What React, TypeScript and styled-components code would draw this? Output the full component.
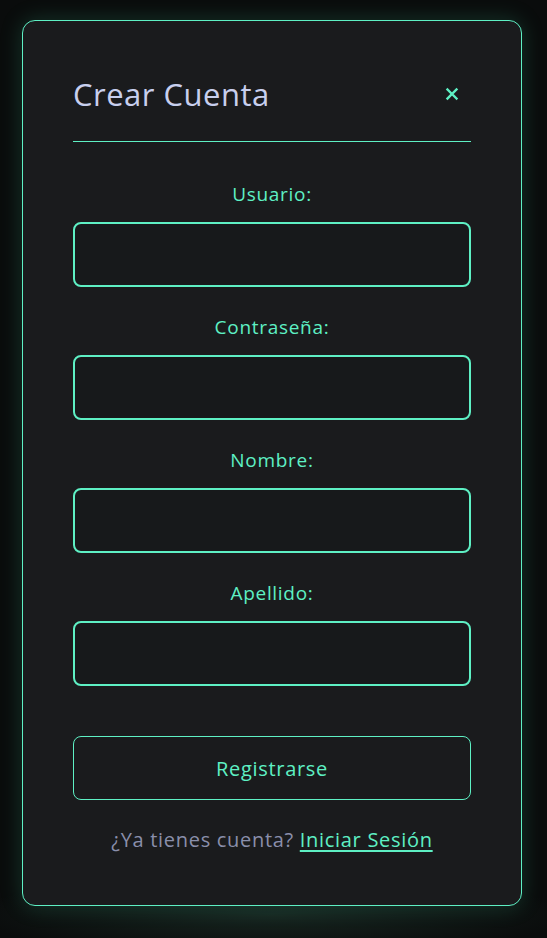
import React from "react";
import styled, { createGlobalStyle } from "styled-components";

const MINT = "#5ef0c4";

const Global = createGlobalStyle`
  html, body {
    margin: 0;
    padding: 0;
    background: #0a0c0c;
    font-family: "Open Sans", "Noto Sans", sans-serif;
  }
  * { box-sizing: border-box; }
`;

const Page = styled.div`
  width: 547px;
  height: 938px;
  padding: 20px 0 0 22px;
  background:
    radial-gradient(ellipse 300px 40px at 270px 915px, rgba(60, 110, 90, 0.25), transparent),
    #0a0c0c;
  overflow: hidden;
`;

const Card = styled.div`
  width: 500px;
  height: 886px;
  background: #1a1b1d;
  border: 1px solid ${MINT};
  border-radius: 13px;
  box-shadow: 0 0 22px rgba(60, 200, 150, 0.22);
  padding: 0 50px;
  display: flex;
  flex-direction: column;
`;

const Header = styled.div`
  height: 121px;
  padding-top: 52px;
  display: flex;
  justify-content: space-between;
  align-items: flex-start;
  border-bottom: 1px solid ${MINT};
`;

const Title = styled.h2`
  margin: 0;
  font-weight: 400;
  font-size: 31px;
  letter-spacing: 0.5px;
  line-height: 42px;
  color: #c8cfee;
`;

const Close = styled.button`
  background: none;
  border: none;
  padding: 0;
  margin: 14px 12px 0 0;
  width: 14px;
  height: 14px;
  display: flex;
  cursor: pointer;
`;

const Form = styled.form`
  display: flex;
  flex-direction: column;
  padding-top: 40px;
`;

const Field = styled.div`
  display: flex;
  flex-direction: column;
  align-items: center;
  margin-bottom: 28px;
`;

const Label = styled.label`
  font-size: 19px;
  letter-spacing: 0.7px;
  line-height: 24px;
  color: ${MINT};
  margin-bottom: 16px;
`;

const Input = styled.input`
  width: 100%;
  height: 65px;
  background: #17191b;
  border: 2px solid ${MINT};
  border-radius: 8px;
  outline: none;
  color: #e0e0e0;
  font-size: 18px;
  padding: 0 14px;
`;

const Submit = styled.button`
  margin-top: 22px;
  width: 100%;
  height: 64px;
  background: transparent;
  border: 1px solid ${MINT};
  border-radius: 8px;
  color: ${MINT};
  font-family: inherit;
  font-size: 20px;
  letter-spacing: 0.7px;
  cursor: pointer;
`;

const Footer = styled.p`
  margin: 27px 0 0;
  text-align: center;
  font-size: 20px;
  letter-spacing: 0.7px;
  line-height: 26px;
  color: #8a8fab;
`;

const Link = styled.a`
  color: ${MINT};
  text-decoration: underline;
  text-underline-offset: 3px;
  cursor: pointer;
`;

const fields = ["Usuario:", "Contraseña:", "Nombre:", "Apellido:"];

export default function App() {
  return (
    <>
      <Global />
      <Page>
        <Card>
          <Header>
            <Title>Crear Cuenta</Title>
            <Close aria-label="Cerrar">
              <svg width="14" height="14" viewBox="0 0 14 14">
                <path d="M2.5 2.5 L11.5 11.5 M11.5 2.5 L2.5 11.5" stroke={MINT} strokeWidth="2.4" strokeLinecap="square" />
              </svg>
            </Close>
          </Header>
          <Form onSubmit={(e) => e.preventDefault()}>
            {fields.map((f) => (
              <Field key={f}>
                <Label>{f}</Label>
                <Input type={f === "Contraseña:" ? "password" : "text"} />
              </Field>
            ))}
            <Submit type="submit">Registrarse</Submit>
            <Footer>
              ¿Ya tienes cuenta? <Link>Iniciar Sesión</Link>
            </Footer>
          </Form>
        </Card>
      </Page>
    </>
  );
}
